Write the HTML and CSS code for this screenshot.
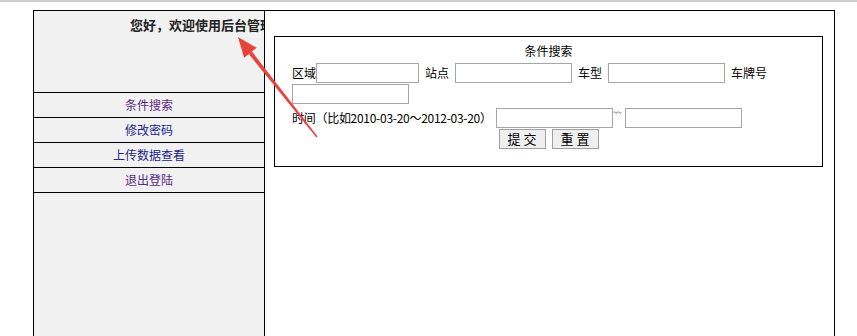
FILE: index.html
```html
<!DOCTYPE html>
<html>
<head>
<meta charset="utf-8">
<link rel="stylesheet" href="styles.css">
</head>
<body>
<div class="topline"></div>
<div class="frame">
  <div class="sidebar">
    <div class="welcome">您好，欢迎使用后台管理</div>
    <a class="menu visited" href="#">条件搜索</a>
    <a class="menu" href="#">修改密码</a>
    <a class="menu" href="#">上传数据查看</a>
    <a class="menu visited" href="#">退出登陆</a>
  </div>
  <div class="content">
    <div class="searchbox">
      <div class="title">条件搜索</div>
      <div class="fields">
        <span class="lbl first">区域</span><input class="ipt short" type="text"><span class="lbl">站点</span><input class="ipt" type="text"><span class="lbl">车型</span><input class="ipt" type="text"><span class="lbl">车牌号</span><input class="ipt" type="text">
      </div>
      <div class="timerow">
        <span class="lbl first timelbl">时间（比如2010-03-20～2012-03-20）</span><input class="ipt" type="text"><span class="tilde">~~</span><input class="ipt" type="text">
      </div>
      <div class="buttons">
        <button class="btn" type="button">提 交</button><button class="btn" type="button">重 置</button>
      </div>
    </div>
  </div>
</div>
<svg class="arrow" width="857" height="336" viewBox="0 0 857 336">
  <polygon points="252.0,51.6 248.8,54.0 316.4,137.5 317.6,136.5" fill="#e8433b"/>
  <polygon points="238,37 256.7,47.8 244.1,57.8" fill="#e8433b"/>
</svg>
</body>
</html>
```
FILE: styles.css
```css
html, body {
  margin: 0;
  padding: 0;
  overflow: hidden;
  background: #fff;
  font-family: "Noto Sans CJK SC", "DejaVu Sans", sans-serif;
  font-size: 12px;
  color: #000;
}
.topline {
  height: 2px;
  background: #cfcfcf;
}
.frame {
  margin: 8px 0 0 33px;
  width: 802px;
  height: 360px;
  box-sizing: border-box;
  border: 1px solid #000;
  border-bottom: none;
  display: flex;
}
.sidebar {
  width: 231px;
  box-sizing: border-box;
  background: #f1f1f1;
  border-right: 1px solid #000;
  display: flex;
  flex-direction: column;
}
.welcome {
  border-bottom: 1px solid #000;
  padding: 5px 0 0 96px;
  height: 76px;
  font-size: 13px;
  font-weight: bold;
  line-height: 17px;
  color: #222;
  white-space: nowrap;
  overflow: hidden;
}
.menu {
  display: block;
  height: 24px;
  line-height: 24px;
  border-bottom: 1px solid #000;
  text-align: center;
  text-decoration: none;
  color: #23238c;
}
.menu.visited {
  color: #5b2a86;
}
.content {
  flex: 1;
  background: #fff;
  padding: 25px 0 0 9px;
}
.searchbox {
  width: 549px;
  box-sizing: border-box;
  border: 1px solid #000;
  padding: 6px 0 17px 17px;
}
.title {
  text-align: center;
  line-height: 16px;
  margin-left: -17px;
}
.fields {
  display: flex;
  flex-wrap: wrap;
  align-items: center;
  row-gap: 1px;
  margin-top: 4px;
  width: 500px;
}
.lbl {
  margin: 0 6px;
  line-height: 16px;
  white-space: nowrap;
}
.lbl.first {
  margin-left: 0;
}
.fields .lbl.first {
  margin-right: 0;
}
.timelbl {
  letter-spacing: -0.28px;
  margin-right: 4px;
}
.ipt {
  width: 117px;
  height: 20px;
  box-sizing: border-box;
  border: 1px solid #a6a6a6;
  margin: 0;
  padding: 0 2px;
  background: #fff;
  font-size: 12px;
}
.ipt.short {
  width: 103px;
}
.timerow {
  display: flex;
  align-items: center;
  margin-top: 4px;
}
.tilde {
  align-self: flex-start;
  font-size: 9px;
  line-height: 9px;
  width: 12px;
  color: #555;
  letter-spacing: -1px;
}
.buttons {
  display: flex;
  justify-content: center;
  gap: 6px;
  margin-left: -17px;
  margin-top: 1px;
}
.btn {
  width: 47px;
  height: 20px;
  box-sizing: border-box;
  border: 1px solid #a0a0a0;
  background: #efefef;
  font-family: "Noto Sans CJK SC", sans-serif;
  font-size: 13px;
  line-height: 16px;
  padding: 0;
  color: #000;
}
.arrow {
  position: absolute;
  left: 0;
  top: 0;
  pointer-events: none;
}
```
